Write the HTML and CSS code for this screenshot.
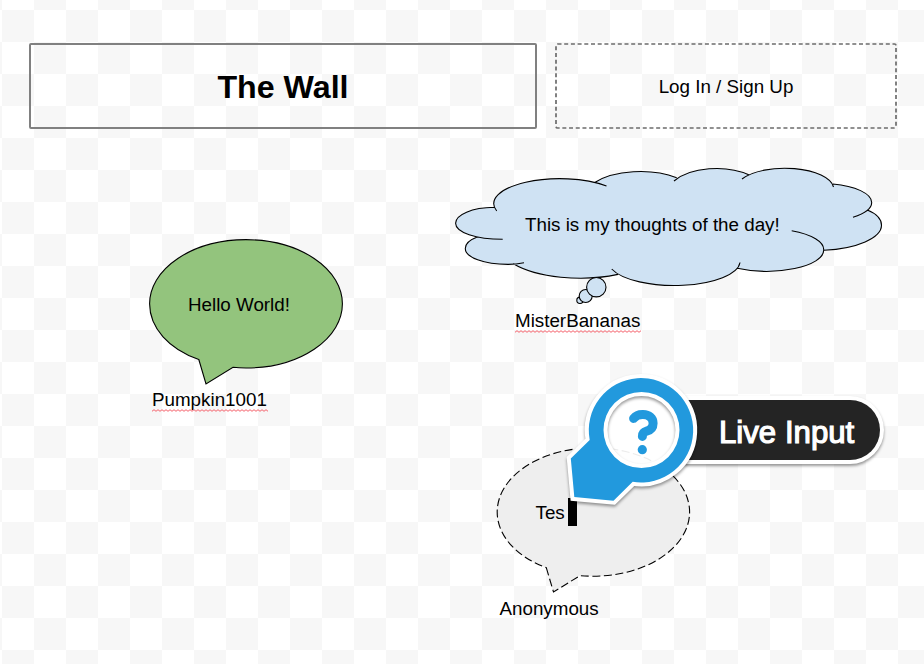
FILE: index.html
```html
<!DOCTYPE html>
<html lang="en">
<head>
<meta charset="utf-8">
<title>The Wall</title>
<link rel="stylesheet" href="styles.css">
</head>
<body>
<svg width="0" height="0" class="defs" aria-hidden="true">
  <defs>
    <pattern id="squiggle" width="4" height="3" patternUnits="userSpaceOnUse">
      <path d="M-1 1.5 L0 2.3 L2 .7 L4 2.3 L5 1.5" fill="none" stroke="#f4606a" stroke-width="1"/>
    </pattern>
  </defs>
</svg>
<header class="header">
  <h1 class="title">The Wall</h1>
  <a class="login">
    <svg class="login-frame" width="342" height="87"><rect x="1" y="1" width="340" height="84" rx="1.5"/></svg>
    <span>Log In / Sign Up</span>
  </a>
</header>
<main class="wall">
  <section class="note note-pumpkin">
    <svg class="shape" width="200" height="150" viewBox="146 236 200 150">
      <path class="green" d="M198.8 359.5 L206 384 L233 367.3 Q239 368 246 368 A96.4 64.2 0 0 0 342.4 303.8 A96.4 64.2 0 0 0 149.6 303.8 C149.6 328 169 349 198.8 359.5 Z"/>
    </svg>
    <p class="message">Hello World!</p>
    <p class="author">Pumpkin1001<svg class="squiggle" width="116" height="3"><rect width="116" height="3" fill="url(#squiggle)"/></svg></p>
  </section>

  <section class="note note-bananas">
    <svg class="shape" width="436" height="144" viewBox="450 163 436 144">
      <path class="cloud-fill" d="M496.7 211 A66 25 0 0 1 606.5 186 L594.3 182.7 A58 28 0 0 1 676.7 177.7 L674 181 A50 26.5 0 0 1 749.3 175 L742 179 A49 21 0 0 1 833.5 187 L833 184 C855 186 871.7 193.5 871.7 202.5 C871.7 208.5 865 213.5 853 217.3 L867.3 210 C876 213.5 881.5 219 881.5 225.3 C881.5 238 857 248.5 824 250.3 L791.7 230.8 A57.5 21 0 0 1 823.7 250.3 A57 21 0 0 1 737.3 268.2 L740 262.5 A66 24.5 0 0 1 611.7 269 L618 274.4 A82 34 0 0 1 513.3 263.7 L524 262.8 C518 264 513 264.4 508 264.4 C484 264.4 465.3 257.5 465.3 248.5 C465.3 244 469.5 240 476.7 237.3 L502.7 239.3 C476 239.3 455.6 232.5 455.6 223.3 C455.6 214.6 472 207.6 494.3 207.3 Z"/>
      <path class="cloud-line" d="M496.7 211 A66 25 0 0 1 606.5 186 M594.3 182.7 A58 28 0 0 1 676.7 177.7 M674 181 A50 26.5 0 0 1 749.3 175 M742 179 A49 21 0 0 1 833.5 187 M833 184 C855 186 871.7 193.5 871.7 202.5 C871.7 208.5 865 213.5 853 217.3 M867.3 210 C876 213.5 881.5 219 881.5 225.3 C881.5 238 857 248.5 824 250.3 M791.7 230.8 A57.5 21 0 0 1 823.7 250.3 A57 21 0 0 1 737.3 268.2 M740 262.5 A66 24.5 0 0 1 611.7 269 M618 274.4 A82 34 0 0 1 513.3 263.7 M524 262.8 C518 264 513 264.4 508 264.4 C484 264.4 465.3 257.5 465.3 248.5 C465.3 244 469.5 240 476.7 237.3 M502.7 239.3 C476 239.3 455.6 232.5 455.6 223.3 C455.6 214.6 472 207.6 494.3 207.3"/>
      <circle class="puff" cx="580" cy="300.3" r="3.2"/>
      <circle class="puff" cx="585.7" cy="296" r="6.5"/>
      <circle class="puff" cx="596.3" cy="287.2" r="9.7"/>
    </svg>
    <p class="message">This is my thoughts of the day!</p>
    <p class="author">MisterBananas<svg class="squiggle" width="126" height="3"><rect width="126" height="3" fill="url(#squiggle)"/></svg></p>
  </section>

  <section class="note note-anonymous">
    <svg class="shape" width="200" height="150" viewBox="494 444 200 150">
      <path class="draft" d="M546.3 567.7 L553.5 592 L580 575.6 Q586 576.2 593.4 576.2 A96.2 64.2 0 0 0 689.6 512 A96.2 64.2 0 0 0 497.2 512 C497.2 536 517 557 546.3 567.7 Z"/>
    </svg>
    <p class="message">Tes<span class="caret"></span></p>
    <p class="author">Anonymous</p>
  </section>

  <aside class="callout">
    <div class="callout-label">Live Input</div>
    <svg class="callout-pin" width="140" height="150" viewBox="562 366 140 150">
      <circle class="pin-face" cx="641.5" cy="430" r="36"/>
      <path class="pin-body" fill-rule="evenodd" d="M589.7 440 A52.2 52.2 0 1 1 632.7 481.8 L613.5 500.7 L574.3 497 L570.8 458.5 Z M603.5 430 a38 38 0 1 0 76 0 a38 38 0 1 0 -76 0 Z"/>
      <path class="pin-mark" d="M633.6 418.4 C636 415.3 639.5 414.4 643 414.5 C649 414.7 653.1 418 653.1 423.2 C653.1 428 650.2 430.2 646.6 431.2 C643.4 432.1 642.4 433.4 642.4 436.4"/>
      <circle class="pin-dot" cx="642.3" cy="449.7" r="4.6"/>
    </svg>
  </aside>
</main>
</body>
</html>
```
FILE: styles.css
```css
* {
  box-sizing: border-box;
}

body {
  margin: 0;
  width: 924px;
  height: 664px;
  overflow: hidden;
  color: #000;
  font: 18.8px/22px "Liberation Sans", Arial, sans-serif;
  background: #fff repeating-conic-gradient(#fff 0 25%, #f7f7f7 0 50%) 2px 10px / 64px 64px;
}

h1, p {
  margin: 0;
}

.defs {
  position: absolute;
}

.header {
  display: grid;
  grid-template-columns: 508px 342px;
  gap: 18px;
  height: 129px;
  padding: 43px 0 0 29px;
}

.title,
.login {
  display: flex;
  align-items: center;
  justify-content: center;
  height: 86px;
}

.title {
  padding-top: 2px;
  border: 2px solid #808080;
  border-radius: 2px;
  font-size: 32.2px;
  line-height: 36px;
}

.login {
  position: relative;
  padding-top: 2px;
}

.login-frame {
  position: absolute;
  inset: 0;
  fill: none;
  stroke: #6c6c6c;
  stroke-width: 1.7;
  stroke-dasharray: 4 2.7;
}

.note,
.callout,
.shape,
.message,
.author,
.callout-label,
.callout-pin {
  position: absolute;
  white-space: nowrap;
}

.shape {
  left: 0;
  top: 0;
  stroke: #000;
  stroke-width: 1.1;
}

.green {
  fill: #93c47d;
}

.cloud-fill {
  fill: #cfe2f3;
  stroke: none;
}

.cloud-line {
  fill: none;
}

.puff {
  fill: #cfe2f3;
}

.draft {
  fill: #eee;
  stroke-dasharray: 8 3.5;
}

.note-pumpkin {
  left: 146px;
  top: 236px;
}

.note-pumpkin .message {
  left: 42px;
  top: 58px;
}

.note-pumpkin .author {
  left: 6px;
  top: 153px;
}

.note-bananas {
  left: 450px;
  top: 163px;
}

.note-bananas .message {
  left: 75px;
  top: 51px;
}

.note-bananas .author {
  left: 65px;
  top: 147px;
}

.note-anonymous {
  left: 494px;
  top: 444px;
}

.note-anonymous .message {
  left: 41.5px;
  top: 58px;
}

.note-anonymous .author {
  left: 5.5px;
  top: 154px;
}

.squiggle {
  position: absolute;
  left: 0;
  top: 20px;
}

.caret {
  position: absolute;
  left: 32px;
  top: -4px;
  width: 9px;
  height: 28px;
  background: #000;
}

.callout {
  left: 562px;
  top: 366px;
}

.callout-label {
  left: 122px;
  top: 30px;
  width: 200px;
  height: 68px;
  padding: 1px 0 0 35px;
  border: 4px solid #fff;
  border-left: 0;
  border-radius: 0 34px 34px 0;
  background: #242424;
  box-shadow: 0 2px 3px rgba(0, 0, 0, .4);
  color: #fff;
  font-size: 31.2px;
  line-height: 64px;
  -webkit-text-stroke: 1.2px #fff;
}

.callout-pin {
  left: 0;
  top: 0;
}

.pin-body {
  fill: #2299dd;
  stroke: #fff;
  stroke-width: 8;
  paint-order: stroke;
  filter: drop-shadow(0 2px 1.5px rgba(0, 0, 0, .4));
}

.pin-face {
  fill: #fff;
  fill-opacity: .92;
}

.pin-mark {
  fill: none;
  stroke: #2299dd;
  stroke-width: 9;
  stroke-linecap: round;
}

.pin-dot {
  fill: #2299dd;
}
```
